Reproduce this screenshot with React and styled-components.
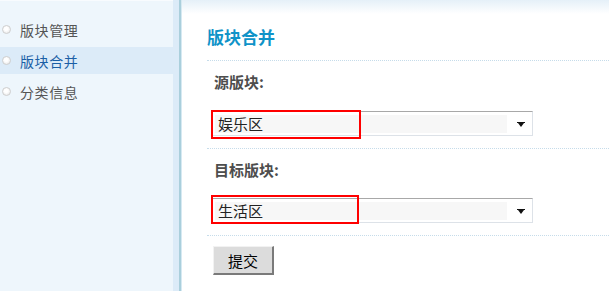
import styled, { createGlobalStyle } from "styled-components"

const GlobalStyle = createGlobalStyle`
  html, body {
    margin: 0;
    padding: 0;
    background: #fff;
    font-family: "Noto Sans CJK SC", "Noto Sans", sans-serif;
  }
`

const Page = styled.div`
  display: flex;
  width: 609px;
  height: 291px;
  overflow: hidden;
`

const Sidebar = styled.div`
  display: flex;
  width: 182px;
  flex-shrink: 0;
  background: #dcebf8;
`

const Menu = styled.ul`
  list-style: none;
  margin: 0;
  padding: 15px 0 0;
  width: 173px;
  background: #eef6fc;
  border-top: 1px solid #f8fbfe;
`

const MenuItem = styled.li`
  display: flex;
  align-items: center;
  gap: 9px;
  height: 27px;
  margin-bottom: 4px;
  padding-left: 2px;
  font-size: 14px;
  letter-spacing: 0.6px;
  color: ${(p) => (p.$active ? "#1b5fa6" : "#555")};
  background: ${(p) => (p.$active ? "#dcebf8" : "transparent")};
`

const Dot = styled.span`
  width: 7px;
  height: 7px;
  border-radius: 50%;
  border: 1px solid #cfcfcf;
  background: radial-gradient(circle at 45% 40%, #ffffff 30%, #e2e2e2 100%);
`

const Edge = styled.div`
  width: 2px;
  margin-left: auto;
  background: #aacfdc;
  border-right: 1px solid #d6e9f2;
`

const Main = styled.div`
  flex: 1;
  padding: 0 0 0 25px;
  background: linear-gradient(#e5f0f8, #ffffff 14px);
`

const Title = styled.h2`
  margin: 0;
  padding: 26px 0 0;
  height: 34px;
  line-height: 22px;
  font-size: 17px;
  font-weight: bold;
  color: #0f93c8;
  border-bottom: 1px dotted #c6dcea;
`

const Field = styled.div`
  padding: 11px 0 12px 4px;
  border-bottom: 1px dotted #c6dcea;
`

const Label = styled.div`
  height: 20px;
  line-height: 20px;
  padding-left: 3px;
  margin-bottom: ${(p) => p.$gap}px;
  font-size: 15px;
  font-weight: bold;
  color: #4d4d4d;
`

const Select = styled.div`
  position: relative;
  display: flex;
  align-items: center;
  box-sizing: border-box;
  width: 322px;
  height: 25px;
  padding: 3px 0 2px 3px;
  background: #fff;
  border: 1px solid #dde2e8;
  border-top-color: #a8a8a8;
`

const SelectValue = styled.div`
  width: 292px;
  height: 18px;
  line-height: 18px;
  padding-left: 3px;
  box-sizing: border-box;
  background: #f7f7f7;
  font-size: 15px;
  color: #222;
`

const Arrow = styled.svg`
  margin-left: 10px;
`

const Mark = styled.div`
  position: absolute;
  left: -1px;
  top: ${(p) => p.$top}px;
  width: ${(p) => p.$w}px;
  height: 29px;
  box-sizing: border-box;
  border: 2px solid #f00;
  pointer-events: none;
`

const Actions = styled.div`
  padding: 10px 0 0 6px;
`

const Button = styled.button`
  width: 61px;
  height: 29px;
  padding: 0;
  font-family: inherit;
  font-size: 15px;
  color: #000;
  background: #dcdcdc;
  border: 1px solid #f2f2f2;
  border-right: 2px solid #7a7a7a;
  border-bottom: 2px solid #7a7a7a;
  cursor: pointer;
`

const DropArrow = () => (
  <Arrow width="8" height="5" viewBox="0 0 8 5">
    <path d="M0 0h8v1H0z M1 1h6L4 5z" fill="#111" />
  </Arrow>
)

const menu = [
  { name: "版块管理" },
  { name: "版块合并", active: true },
  { name: "分类信息" },
]

const App = () => {
  return (
    <>
      <GlobalStyle />
      <Page>
        <Sidebar>
          <Menu>
            {menu.map((m) => (
              <MenuItem key={m.name} $active={m.active}>
                <Dot />
                {m.name}
              </MenuItem>
            ))}
          </Menu>
          <Edge />
        </Sidebar>
        <Main>
          <Title>版块合并</Title>
          <Field>
            <Label $gap={19}>源版块:</Label>
            <Select>
              <SelectValue>娱乐区</SelectValue>
              <DropArrow />
              <Mark $top={-2} $w={150} />
            </Select>
          </Field>
          <Field>
            <Label $gap={18}>目标版块:</Label>
            <Select>
              <SelectValue>生活区</SelectValue>
              <DropArrow />
              <Mark $top={-4} $w={148} />
            </Select>
          </Field>
          <Actions>
            <Button>提交</Button>
          </Actions>
        </Main>
      </Page>
    </>
  )
}

export default App
